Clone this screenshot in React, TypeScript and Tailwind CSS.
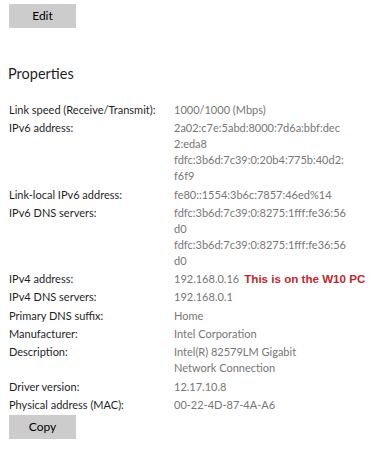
import React from "react";

type Row = { label: string; values: React.ReactNode[] };

const rows: Row[] = [
  { label: "Link speed (Receive/Transmit):", values: ["1000/1000 (Mbps)"] },
  {
    label: "IPv6 address:",
    values: ["2a02:c7e:5abd:8000:7d6a:bbf:dec", "2:eda8", "fdfc:3b6d:7c39:0:20b4:775b:40d2:", "f6f9"],
  },
  { label: "Link-local IPv6 address:", values: ["fe80::1554:3b6c:7857:46ed%14"] },
  {
    label: "IPv6 DNS servers:",
    values: ["fdfc:3b6d:7c39:0:8275:1fff:fe36:56", "d0", "fdfc:3b6d:7c39:0:8275:1fff:fe36:56", "d0"],
  },
  {
    label: "IPv4 address:",
    values: [
      <span key="a" className="flex items-center">
        <span>192.168.0.16</span>
        <span
          className="ml-[5px] font-bold text-[#c0272d] text-[11.6px]"
          style={{ fontFamily: '"Liberation Sans", Arial, sans-serif' }}
        >
          This is on the W10 PC
        </span>
      </span>,
    ],
  },
  { label: "IPv4 DNS servers:", values: ["192.168.0.1"] },
  { label: "Primary DNS suffix:", values: ["Home"] },
  { label: "Manufacturer:", values: ["Intel Corporation"] },
  { label: "Description:", values: ["Intel(R) 82579LM Gigabit", "Network Connection"] },
  { label: "Driver version:", values: ["12.17.10.8"] },
  { label: "Physical address (MAC):", values: ["00-22-4D-87-4A-A6"] },
];

export default function App() {
  return (
    <div
      className="w-[384px] h-[461px] bg-white overflow-hidden text-[11px] text-[#1f1f1f]"
      style={{ fontFamily: '"Segoe UI", Lato, "Open Sans", sans-serif' }}
    >
      <div className="pt-[4px] pl-[9px]">
        <div className="w-[67px] h-[24px] bg-[#cccccc] flex items-center justify-center text-black text-[12px]">
          Edit
        </div>
      </div>
      <div className="pl-[8px] mt-[36px] text-[14.5px] leading-[20px] text-[#1f1f1f]">Properties</div>
      <div className="pl-[9px] mt-[18px] flex flex-col gap-y-[2.3px]">
        {rows.map((r, i) => (
          <div key={i} className="flex leading-[16px]">
            <div className="w-[165px] shrink-0">{r.label}</div>
            <div className="flex flex-col text-[#767676]">
              {r.values.map((v, j) => (
                <div key={j}>{v}</div>
              ))}
            </div>
          </div>
        ))}
      </div>
      <div className="pl-[9px] mt-[2px]">
        <div className="w-[67px] h-[24px] bg-[#cccccc] flex items-center justify-center text-black text-[12px]">
          Copy
        </div>
      </div>
    </div>
  );
}
